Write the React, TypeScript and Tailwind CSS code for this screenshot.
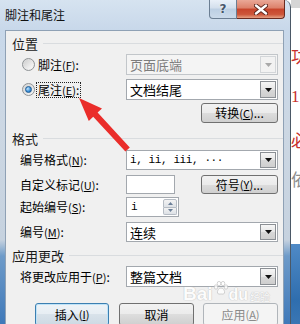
import React from "react";

function Tri({ color }: { color: string }) {
  return (
    <svg width="7" height="4" viewBox="0 0 7 4">
      <path d="M0 0H7L3.5 4Z" fill={color} />
    </svg>
  );
}

function Combo({ text, disabled, h, mono }: { text: React.ReactNode; disabled?: boolean; h: string; mono?: boolean }) {
  return (
    <div
      className={
        disabled
          ? `ml-auto mr-[5px] flex w-[152px] items-center border border-[#c2c6ca] bg-[#f4f4f4] text-[#7d7d7d] ${h}`
          : `ml-auto mr-[5px] flex w-[152px] items-center border border-[#a3a8ae] bg-white text-black ${h}`
      }
    >
      <span className={mono ? "flex-1 pl-[3px] font-['Liberation_Mono',monospace] text-[11px] tracking-[-0.4px]" : "flex-1 pl-[3px] text-[13px]"}>{text}</span>
      <div
        className={
          disabled
            ? "mr-[1px] flex h-[calc(100%-2px)] w-[16px] items-center justify-center border border-[#d3d6d9] bg-[#f2f2f2]"
            : "mr-[1px] flex h-[calc(100%-2px)] w-[16px] items-center justify-center border border-[#8b8f94] bg-[linear-gradient(#f6f6f6,#e6e6e6_50%,#d8d8d8_50%,#cfcfcf)]"
        }
      >
        <Tri color={disabled ? "#a9a9a9" : "#111"} />
      </div>
    </div>
  );
}

function Btn({ children, cls }: { children: React.ReactNode; cls?: string }) {
  return (
    <div
      className={`flex items-center justify-center rounded-[3px] border border-[#707070] bg-[linear-gradient(#f2f2f2,#ebebeb_50%,#dddddd_50%,#cfcfcf)] text-[12px] text-black ${cls ?? ""}`}
    >
      {children}
    </div>
  );
}

function Acc({ k }: { k: string }) {
  return (
    <span className="text-[11px]">
      (<span className="underline">{k}</span>)
    </span>
  );
}

function Header({ title, mt }: { title: string; mt: string }) {
  return (
    <div className={`flex h-[13px] items-center pl-[6px] ${mt}`}>
      <span className="text-[13px] text-[#1a1a1a]">{title}</span>
      <div className="ml-[5px] h-px flex-1 bg-[#d9dcdf]" />
    </div>
  );
}

function Radio({ checked }: { checked?: boolean }) {
  return (
    <div className="flex h-[13px] w-[13px] items-center justify-center rounded-full border border-[#8f9396] bg-[linear-gradient(135deg,#d4d4d4,#f6f6f6)]">
      {checked ? (
        <div className="h-[7px] w-[7px] rounded-full border border-[#1d5b94] bg-[radial-gradient(circle_at_35%_35%,#c7e6fb,#3d93dc_55%,#17599b)]" />
      ) : (
        <div className="h-[9px] w-[9px] rounded-full bg-[linear-gradient(135deg,#cfcfcf,#fbfbfb)]" />
      )}
    </div>
  );
}

export default function App() {
  return (
    <div className="relative flex h-[324px] w-[300px] overflow-hidden bg-white font-['Noto_Sans_CJK_SC',sans-serif] text-[12px] leading-none text-black">
      {/* window */}
      <div className="flex w-[291px] shrink-0 flex-col rounded-tr-[7px] border-r border-[#4b5866] bg-[linear-gradient(180deg,#d6e3f0_0%,#c8d8ea_9%,#ccd7e3_40%,#c6d2df_74%,#6e9bc9_79%,#3f79b9_100%)]">
        {/* title bar */}
        <div className="flex h-[30px] shrink-0 items-start">
          <span className="pl-[5px] pt-[9px] text-[12px] text-[#111]">脚注和尾注</span>
          <div className="flex-1" />
          <div className="flex h-[19px] w-[28px] items-center justify-center rounded-bl-[4px] border border-t-0 border-[#6b7e93] bg-[linear-gradient(#e9f0f8,#d3dfec_45%,#bccfe3_50%,#cbdaea)]">
            <span className="font-['DejaVu_Sans',sans-serif] text-[12px] font-bold text-[#46566a] [text-shadow:0_0_2px_#fff]">?</span>
          </div>
          <div className="mr-[5px] flex h-[19px] w-[48px] items-center justify-center rounded-br-[4px] border border-t-0 border-l-0 border-[#6a2b20] bg-[linear-gradient(#eaa897,#dc806a_45%,#c7442b_50%,#cd563a_80%,#e5a083)]">
            <svg width="14" height="11" viewBox="0 0 14 11">
              <path d="M2 1.5L12 9.5M12 1.5L2 9.5" stroke="#5a241b" strokeWidth="4.2" strokeLinecap="round" />
              <path d="M2 1.5L12 9.5M12 1.5L2 9.5" stroke="#fff" strokeWidth="2.4" strokeLinecap="round" />
            </svg>
          </div>
        </div>
        {/* body */}
        <div className="flex flex-1">
          <div className="w-[5px] shrink-0" />
          <div className="flex w-[279px] shrink-0 flex-col border-l border-r border-t border-[#8fa1b5] bg-[#f0f0f0]">
            <Header title="位置" mt="mt-[6px]" />
            {/* row1 */}
            <div className="mt-[4px] flex h-[21px] items-center">
              <div className="ml-[16px]">
                <Radio />
              </div>
              <span className="ml-[1px] border border-transparent px-[1px] py-[1px] text-[12px]">
                脚注<Acc k="F" />:
              </span>
              <Combo text="页面底端" disabled h="h-[21px]" />
            </div>
            {/* row2 */}
            <div className="mt-[4px] flex h-[21px] items-center">
              <div className="ml-[16px]">
                <Radio checked />
              </div>
              <span className="ml-[1px] border border-dotted border-[#222] px-[1px] py-[1px] text-[12px]">
                尾注<Acc k="E" />:
              </span>
              <Combo text="文档结尾" h="h-[21px]" />
            </div>
            <div className="mt-[3px] flex justify-end pr-[5px]">
              <Btn cls="h-[20px] w-[77px]">
                转换<Acc k="C" />...
              </Btn>
            </div>

            <Header title="格式" mt="mt-[9px]" />
            <div className="mt-[5px] flex h-[20px] items-center">
              <span className="pl-[14px]">
                编号格式<Acc k="N" />:
              </span>
              <Combo text="i, ii, iii, ···" mono h="h-[20px]" />
            </div>
            <div className="mt-[5px] flex h-[19px] items-center">
              <span className="w-[120px] pl-[14px]">
                自定义标记<Acc k="U" />:
              </span>
              <div className="h-[19px] w-[49px] border border-[#a3a8ae] bg-white" />
              <div className="flex-1" />
              <Btn cls="mr-[5px] h-[19px] w-[77px]">
                符号<Acc k="Y" />...
              </Btn>
            </div>
            <div className="mt-[3px] flex h-[20px] items-center">
              <span className="w-[120px] pl-[14px]">
                起始编号<Acc k="S" />:
              </span>
              <div className="flex h-[20px] w-[53px] items-center border border-[#a3a8ae] bg-white">
                <span className="flex-1 pl-[4px] font-['Liberation_Mono',monospace] text-[11px]">i</span>
                <div className="mr-[1px] flex h-[16px] w-[14px] flex-col">
                  <div className="flex flex-1 items-center justify-center rounded-t-[2px] border border-[#b6bcc4] bg-[linear-gradient(#f3f3f3,#dde1e6)]">
                    <svg width="5" height="3" viewBox="0 0 5 3">
                      <path d="M0 3H5L2.5 0Z" fill="#6b7f98" />
                    </svg>
                  </div>
                  <div className="flex flex-1 items-center justify-center rounded-b-[2px] border border-t-0 border-[#b6bcc4] bg-[linear-gradient(#f3f3f3,#dde1e6)]">
                    <svg width="5" height="3" viewBox="0 0 5 3">
                      <path d="M0 0H5L2.5 3Z" fill="#6b7f98" />
                    </svg>
                  </div>
                </div>
              </div>
            </div>
            <div className="mt-[5px] flex h-[20px] items-center">
              <span className="pl-[14px]">
                编号<Acc k="M" />:
              </span>
              <Combo text="连续" h="h-[20px]" />
            </div>

            <Header title="应用更改" mt="mt-[7px]" />
            <div className="mt-[4px] flex h-[21px] items-center">
              <span className="pl-[14px]">
                将更改应用于<Acc k="P" />:
              </span>
              <Combo text="整篇文档" h="h-[21px]" />
            </div>
            <div className="mt-[16px] flex">
              <div className="ml-[29px] flex h-[23px] w-[74px] items-center justify-center rounded-[3px] border border-[#3c7fb1] bg-[linear-gradient(#eef3f7,#e6edf3_50%,#d8e2ea_50%,#cdd9e3)] shadow-[inset_0_0_0_1px_#bfe3f8] text-[12px]">
                插入<Acc k="I" />
              </div>
              <Btn cls="ml-[10px] h-[23px] w-[75px]">取消</Btn>
              <div className="ml-[9px] flex h-[23px] w-[75px] items-center justify-center rounded-[3px] border border-[#b0b5ba] bg-[#f4f4f4] text-[12px] text-[#8a8a8a]">
                应用<Acc k="A" />
              </div>
            </div>
          </div>
          <div className="flex-1" />
        </div>
      </div>
      {/* outside page: partial glyphs of the page behind the dialog */}
      <div className="flex w-[9px] shrink-0 flex-col overflow-hidden bg-white">
        <div className="h-[8px] bg-[#d6d6d6]" />
        <div className="mt-[39px] h-[18px] w-[20px] text-[17px] leading-[18px] text-[#c9302c]">功</div>
        <div className="mt-[23px] h-[18px] w-[20px] font-['Liberation_Serif',serif] text-[17px] leading-[18px] text-[#c9302c]">1</div>
        <div className="mt-[25px] h-[18px] w-[20px] text-[17px] leading-[18px] text-[#c9302c]">必</div>
        <div className="mt-[20px] h-[20px] w-[20px] text-[17px] leading-[20px] text-[#8e8e8e]">依</div>
        <div className="mt-[55px] flex-1 bg-[linear-gradient(#4f8ac6,#2f6eae_70%,#3a76b4)]" />
      </div>

      {/* red arrow */}
      <svg className="pointer-events-none absolute left-0 top-0" width="300" height="324" viewBox="0 0 300 324">
        <path d="M79 98 L102 108.5 L97.6 112.6 L129.8 147.4 L125.4 151.6 L93.2 116.8 L88.8 121 Z" fill="#ea2d2a" />
      </svg>

      {/* watermark */}
      <div className="pointer-events-none absolute left-[183px] top-[281px] flex items-end text-white opacity-80 [text-shadow:0_0_1px_#b9b9b9,0_0_1px_#b9b9b9]">
        <span className="font-['Liberation_Sans',sans-serif] text-[19px] font-bold leading-none">Bai</span>
        <svg className="mb-[8px]" width="16" height="14" viewBox="0 0 16 14">
          <g fill="#fff" stroke="#bdbdbd" strokeWidth="0.8">
            <ellipse cx="3" cy="6" rx="1.8" ry="2.2" />
            <ellipse cx="6" cy="2.6" rx="1.8" ry="2.2" />
            <ellipse cx="10" cy="2.6" rx="1.8" ry="2.2" />
            <ellipse cx="13" cy="6" rx="1.8" ry="2.2" />
            <path d="M8 7C5.5 7 4 10 4.5 12C5 13.6 7 13 8 13C9 13 11 13.6 11.5 12C12 10 10.5 7 8 7Z" />
          </g>
        </svg>
        <span className="font-['Liberation_Sans',sans-serif] text-[16px] font-bold leading-none">du</span>
        <span className="mb-[1px] ml-[2px] text-[10px] leading-none">经验</span>
      </div>
    </div>
  );
}
